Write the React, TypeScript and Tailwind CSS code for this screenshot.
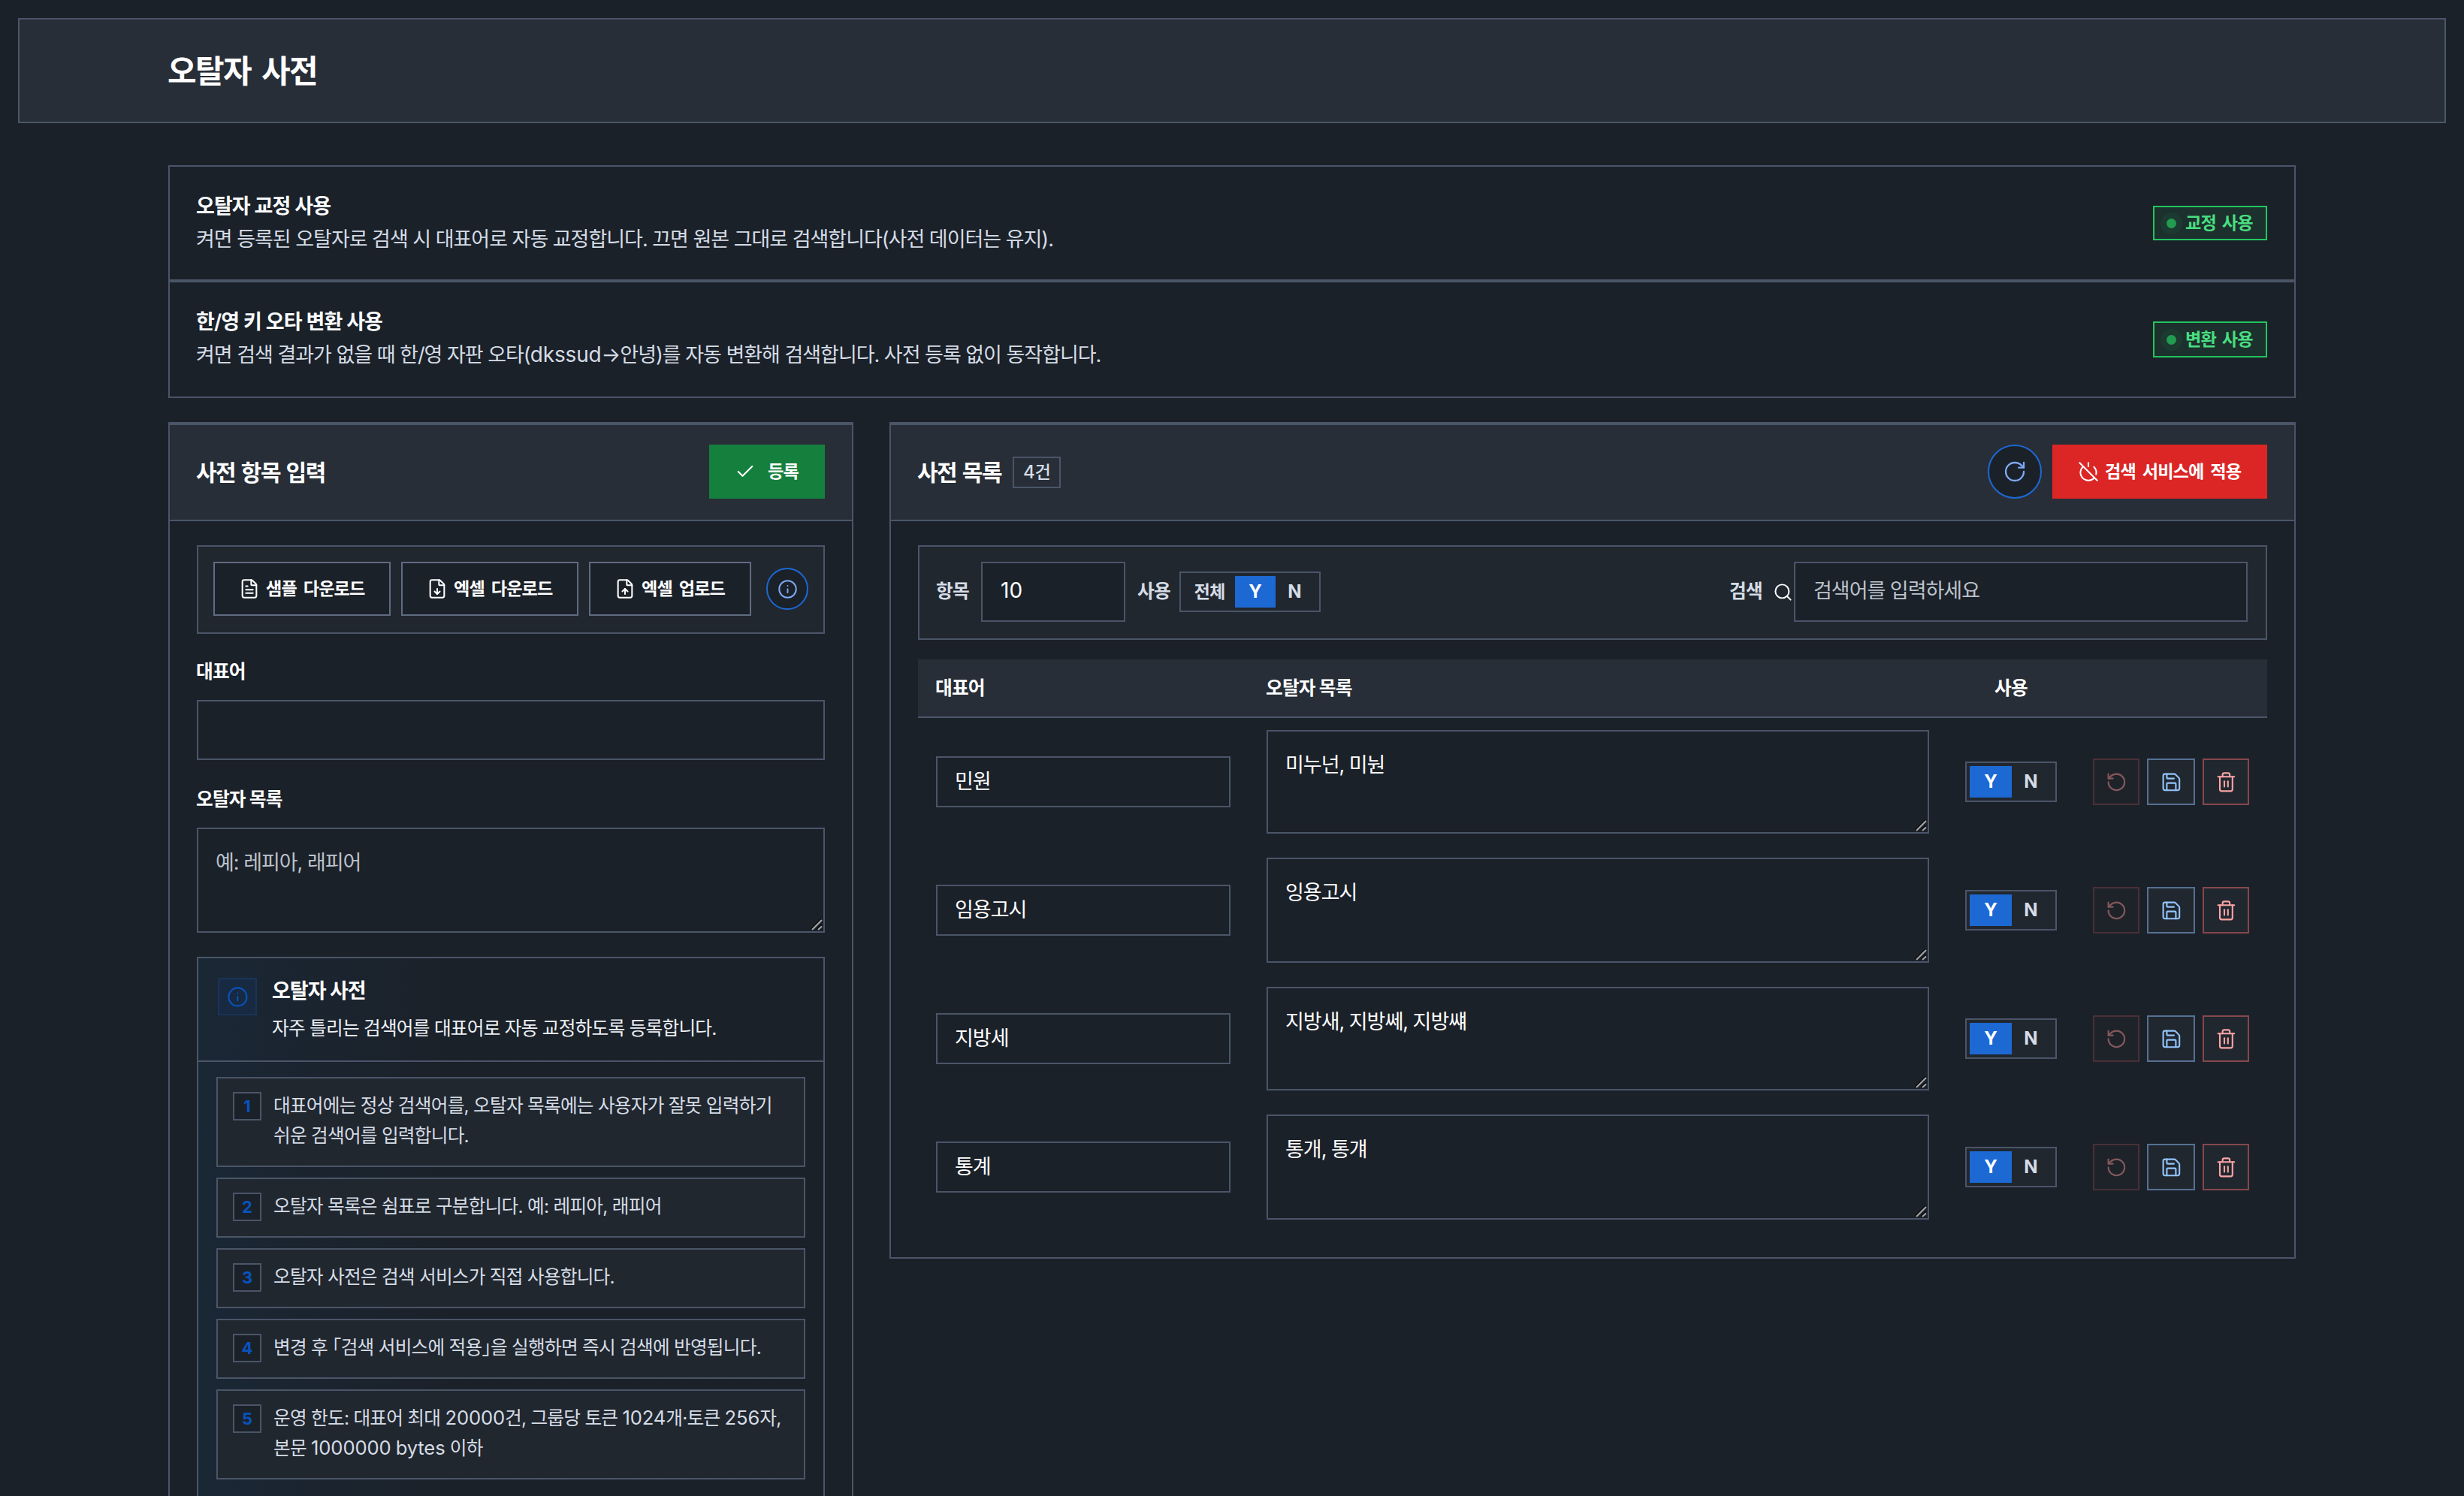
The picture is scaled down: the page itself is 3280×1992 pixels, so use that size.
import type { ReactNode } from "react";
import clsx from "clsx";
import {
  Check,
  FileDown,
  FileText,
  FileUp,
  Info,
  PowerOff,
  RotateCcw,
  RotateCw,
  Save,
  Search,
  Trash2,
} from "lucide-react";

type Entry = { word: string; typos: string; tall?: boolean };

const entries: Entry[] = [
  { word: "민원", typos: "미누넌, 미눤" },
  { word: "임용고시", typos: "잉용고시", tall: true },
  { word: "지방세", typos: "지방새, 지방쎄, 지방썌" },
  { word: "통계", typos: "통개, 통걔", tall: true },
];

const guides = [
  "대표어에는 정상 검색어를, 오탈자 목록에는 사용자가 잘못 입력하기\n쉬운 검색어를 입력합니다.",
  "오탈자 목록은 쉼표로 구분합니다. 예: 레피아, 래피어",
  "오탈자 사전은 검색 서비스가 직접 사용합니다.",
  "변경 후 「검색 서비스에 적용」을 실행하면 즉시 검색에 반영됩니다.",
  "운영 한도: 대표어 최대 20000건, 그룹당 토큰 1024개·토큰 256자,\n본문 1000000 bytes 이하",
];

// Type scale: hangul is set slightly tighter than the font's own advance
const t28 = "text-[27px] tracking-[-1.02px]";
const t26 = "text-[24.7px] tracking-[-0.78px]";
const t24 = "text-[23.2px] tracking-[-0.84px]";

const line = "border-2 border-[#4a5568]";

// Latin runs sit a little larger than the hangul around them
function Mixed({ text }: { text: string }) {
  return text.split(/([A-Za-z0-9]+)/).map((part, i) =>
    i % 2 ? (
      <span key={i} className="text-[1.037em] leading-none tracking-[-0.005em]">
        {part}
      </span>
    ) : (
      part
    ),
  );
}

function StatusBadge({ children, className }: { children: ReactNode; className: string }) {
  return (
    <div
      className={clsx(
        "flex w-[152px] items-center border-2 border-[#22c55e] bg-[#1c302d] pl-4 font-bold whitespace-nowrap text-[#4ade80] [word-spacing:3px]",
        t24,
        className,
      )}
    >
      <span className="mr-3 size-[13px] rounded-full bg-[#219c50] ring-8 ring-[#1c3a30]" />
      {children}
    </div>
  );
}

function SettingRow({
  title,
  desc,
  badge,
  tall,
}: {
  title: string;
  desc: string;
  badge: string;
  tall?: boolean;
}) {
  return (
    <div
      className={clsx(
        "flex items-center justify-between pr-9 pl-[35px]",
        line,
        t28,
        tall ? "h-[156px]" : "h-[154px]",
      )}
    >
      <div className={clsx("leading-[44px]", tall && "-mt-[3px]")}>
        <p className="font-semibold tracking-[-0.93px] text-[#f8fafc]">{title}</p>
        <p className="text-[#d5dce6]">
          <Mixed text={desc} />
        </p>
      </div>
      <StatusBadge className={tall ? "h-12" : "h-[46px]"}>{badge}</StatusBadge>
    </div>
  );
}

function ResizeGrip() {
  return (
    <svg
      className="pointer-events-none absolute right-[3px] bottom-[3px]"
      width="16"
      height="16"
      viewBox="0 0 16 16"
      fill="none"
    >
      <path d="M0.5 14.5 14.5 0.5M8.5 14.5 14.5 8.5" stroke="#0b0e12" strokeWidth="2" />
      <path d="M2 15 15 2M10 15 15 10.5" stroke="#a8a9a6" strokeWidth="2" />
    </svg>
  );
}

function TextArea({
  value,
  placeholder,
  className,
}: {
  value?: string;
  placeholder?: string;
  className: string;
}) {
  return (
    <div className={clsx("relative", className)}>
      <textarea
        defaultValue={value}
        placeholder={placeholder}
        className={clsx(
          "block size-full resize-none overflow-hidden bg-[#1b2129] px-[23px] pt-[23px] leading-[44px] text-white placeholder:text-[#bdc3cc]",
          line,
          t28,
        )}
      />
      <ResizeGrip />
    </div>
  );
}

function OutlineButton({
  icon,
  className,
  children,
}: {
  icon: ReactNode;
  className: string;
  children: ReactNode;
}) {
  return (
    <button
      className={clsx(
        "flex h-[72px] items-center gap-2 border-2 border-[#5f6b80] bg-[#1b2129] pl-8 font-bold whitespace-nowrap [word-spacing:4px]",
        t24,
        className,
      )}
    >
      {icon}
      {children}
    </button>
  );
}

function YesNo({ withAll }: { withAll?: boolean }) {
  return (
    <div
      className={clsx(
        "flex h-[54px] items-stretch bg-[#21272f] p-1 text-2xl font-bold text-[#d5dce6]",
        line,
        withAll ? "w-[188px]" : "w-[122px]",
      )}
    >
      {withAll && (
        <button className={clsx("w-[68px] whitespace-nowrap", t24)}>전체</button>
      )}
      <button
        className={clsx("bg-[#1c69d4] pb-px text-white", withAll ? "w-[54px]" : "w-14")}
      >
        Y
      </button>
      <button className="w-[51px] pb-px">N</button>
    </div>
  );
}

function EntryRow({ entry }: { entry: Entry }) {
  return (
    <div className="flex items-center px-6 py-4">
      <input
        defaultValue={entry.word}
        className={clsx("h-[68px] w-[392px] bg-[#1b2129] px-[23px] pb-1.5 text-white", line, t28)}
      />
      <TextArea
        value={entry.typos}
        className={clsx("ml-12 w-[882px]", entry.tall ? "h-[140px]" : "h-[138px]")}
      />
      <div className="ml-12">
        <YesNo />
      </div>
      <div className="ml-12 flex">
        <button className="flex h-[62px] w-[62px] items-center justify-center border-2 border-[#4a3037] bg-[#1d2329] text-[#84585d]">
          <RotateCcw size={28.8} strokeWidth={1.75} />
        </button>
        <button className="ml-2.5 flex h-[62px] w-16 items-center justify-center border-2 border-[#557194] bg-[#21272f] text-[#93c5fd]">
          <Save size={28.8} strokeWidth={1.75} />
        </button>
        <button className="ml-2.5 flex h-[62px] w-[62px] items-center justify-center border-2 border-[#86484c] bg-[#21272f] text-[#fca5a5]">
          <Trash2 size={28.8} strokeWidth={1.75} />
        </button>
      </div>
    </div>
  );
}

function PanelHeader({ title, children }: { title: ReactNode; children: ReactNode }) {
  return (
    <div className="flex h-[130px] items-start justify-between border-t-2 border-b-2 border-[#4a5568] bg-[#272e37] pt-[26px] pr-9 pl-[35px]">
      <div className="flex h-[74px] items-center">{title}</div>
      <div className="flex gap-3.5">{children}</div>
    </div>
  );
}

function EntryForm() {
  return (
    <section className={clsx("h-[1500px] w-[912px]", line)}>
      <PanelHeader
        title={
          <h2 className="text-[30px] font-bold tracking-[-1.5px] [word-spacing:2px]">
            사전 항목 입력
          </h2>
        }
      >
        <button
          className={clsx(
            "flex h-[72px] w-[154px] items-center gap-4 bg-[#15803d] pl-[34px] font-bold whitespace-nowrap",
            t24,
          )}
        >
          <Check size={28} strokeWidth={1.75} />
          등록
        </button>
      </PanelHeader>
      <div className="px-9 pt-8">
        <div className={clsx("flex h-[118px] items-start gap-3.5 bg-[#21272f] p-5", line)}>
          <OutlineButton
            className="w-[236px]"
            icon={<FileText size={28} strokeWidth={1.75} />}
          >
            샘플 다운로드
          </OutlineButton>
          <OutlineButton
            className="w-[236px]"
            icon={<FileDown size={28} strokeWidth={1.75} />}
          >
            엑셀 다운로드
          </OutlineButton>
          <OutlineButton className="w-[216px]" icon={<FileUp size={28} strokeWidth={1.75} />}>
            엑셀 업로드
          </OutlineButton>
          <button className="mt-2 ml-1.5 flex size-14 items-center justify-center rounded-full border-2 border-[#1c69d4] bg-[#1b2129] text-[#7fa9f5]">
            <Info size={27} strokeWidth={1.75} />
          </button>
        </div>

        <label className={clsx("-ml-px flex h-[88px] items-center pt-3.5 font-bold", t26)}>
          대표어
        </label>
        <input className={clsx("block h-20 w-full bg-[#1b2129] px-6", line, t28)} />
        <label className={clsx("-ml-px flex h-[90px] items-center pt-4 font-bold", t26)}>
          오탈자 목록
        </label>
        <TextArea placeholder="예: 레피아, 래피어" className="h-[140px]" />

        <div
          className={clsx(
            "mt-8 h-[760px] bg-linear-to-r from-[#1a2735] to-[#1b2129] to-40%",
            line,
          )}
        >
          <div className="flex h-[138px] border-b-2 border-[#4a5568] px-[26px] pt-[26px]">
            <div className="mr-5 flex h-[50px] w-[52px] items-center justify-center border-2 border-[#1a3459] bg-[#182a41] text-[#0753bf]">
              <Info size={28.8} strokeWidth={1.75} />
            </div>
            <div>
              <h3 className="-mt-0.5 text-[27px] leading-[40px] font-bold tracking-[-1px]">
                오탈자 사전
              </h3>
              <p className={clsx("mt-[9px] leading-[40px] text-[#eef1f6]", t26)}>
                자주 틀리는 검색어를 대표어로 자동 교정하도록 등록합니다.
              </p>
            </div>
          </div>
          <ol className="flex flex-col gap-3.5 px-6 pt-5">
            {guides.map((text, i) => (
              <li
                key={i}
                className={clsx("flex items-start bg-[#21272f] px-5 py-[18px]", line)}
              >
                <span
                  className={clsx(
                    "mr-4 flex size-[38px] shrink-0 items-center justify-center bg-[#1b2129] text-[22px] font-bold text-[#0753bf]",
                    line,
                  )}
                >
                  {i + 1}
                </span>
                {/* halt: corner brackets take half an em */}
                <p
                  className={clsx(
                    "-mt-0.5 mb-0.5 leading-[40px] whitespace-pre text-[#d5dce6] [font-feature-settings:'halt']",
                    t26,
                  )}
                >
                  <Mixed text={text} />
                </p>
              </li>
            ))}
          </ol>
        </div>
      </div>
    </section>
  );
}

function EntryList() {
  return (
    <section className={clsx("w-[1872px] pb-[34px]", line)}>
      <PanelHeader
        title={
          <>
            <h2 className="w-[127px] text-[30px] font-bold tracking-[-1.5px] whitespace-nowrap [word-spacing:2px]">
              사전 목록
            </h2>
            <span
              className={clsx(
                "flex h-[42px] w-16 items-center justify-center font-medium text-[#d5dce6]",
                line,
                t24,
              )}
            >
              <Mixed text={`${entries.length}건`} />
            </span>
          </>
        }
      >
        <button className="flex size-[72px] items-center justify-center rounded-full border-2 border-[#1c69d4] bg-[#1b2129] text-[#7fa9f5]">
          <RotateCw size={32} strokeWidth={1.75} />
        </button>
        <button
          className={clsx(
            "flex h-[72px] w-[286px] items-center gap-2 bg-[#dc2626] pl-[34px] font-bold whitespace-nowrap [word-spacing:4px]",
            t24,
          )}
        >
          <PowerOff size={28} strokeWidth={1.75} />
          검색 서비스에 적용
        </button>
      </PanelHeader>

      <div className="px-9 pt-8">
        <div
          className={clsx(
            "flex h-[126px] items-start justify-between bg-[#21272f] pt-5 pr-6 pl-[22px] text-[#d5dce6]",
            line,
          )}
        >
          <div className="flex h-20 items-center">
            <span className={clsx("w-[60px] font-semibold", t26)}>항목</span>
            <input
              defaultValue="10"
              className={clsx("h-20 w-48 bg-[#1b2129] px-6 pb-1 text-[28px] text-white", line)}
            />
            <span className={clsx("ml-4 w-14 font-semibold", t26)}>사용</span>
            <YesNo withAll />
          </div>
          <div className="flex h-20 items-center">
            <span className={clsx("w-[58px] font-semibold", t26)}>검색</span>
            <Search className="mr-[1px] text-white" size={27} strokeWidth={1.75} />
            <input
              placeholder="검색어를 입력하세요"
              className={clsx(
                "h-20 w-[604px] bg-[#1b2129] px-6 pb-1 placeholder:text-[#bdc3cc]",
                line,
                t28,
              )}
            />
          </div>
        </div>

        <div
          className={clsx(
            "mt-[26px] flex h-[78px] items-center border-b-2 border-[#4a5568] bg-[#272e37] px-[23px] pt-0.5 font-bold",
            t26,
          )}
        >
          <span className="w-[440px]">대표어</span>
          <span className="w-[931px]">오탈자 목록</span>
          <span className="w-[122px] text-center">사용</span>
        </div>
        {entries.map((entry) => (
          <EntryRow key={entry.word} entry={entry} />
        ))}
      </div>
    </section>
  );
}

export default function App() {
  return (
    <div className="h-[1992px] w-[3280px] overflow-hidden bg-[#1b2129] p-6 font-[Inter,'Noto_Sans_CJK_KR',sans-serif] text-white">
      <header className={clsx("flex h-[140px] items-center bg-[#272e37] pl-[197px]", line)}>
        <h1 className="text-[42px] font-bold tracking-[-1.7px] [word-spacing:6px]">
          오탈자 사전
        </h1>
      </header>
      <main className="mx-[200px] mt-14">
        <SettingRow
          title="오탈자 교정 사용"
          desc="켜면 등록된 오탈자로 검색 시 대표어로 자동 교정합니다. 끄면 원본 그대로 검색합니다(사전 데이터는 유지)."
          badge="교정 사용"
        />
        <SettingRow
          title="한/영 키 오타 변환 사용"
          desc="켜면 검색 결과가 없을 때 한/영 자판 오타(dkssud→안녕)를 자동 변환해 검색합니다. 사전 등록 없이 동작합니다."
          badge="변환 사용"
          tall
        />
        <div className="mt-8 flex items-start gap-12">
          <EntryForm />
          <EntryList />
        </div>
      </main>
    </div>
  );
}
